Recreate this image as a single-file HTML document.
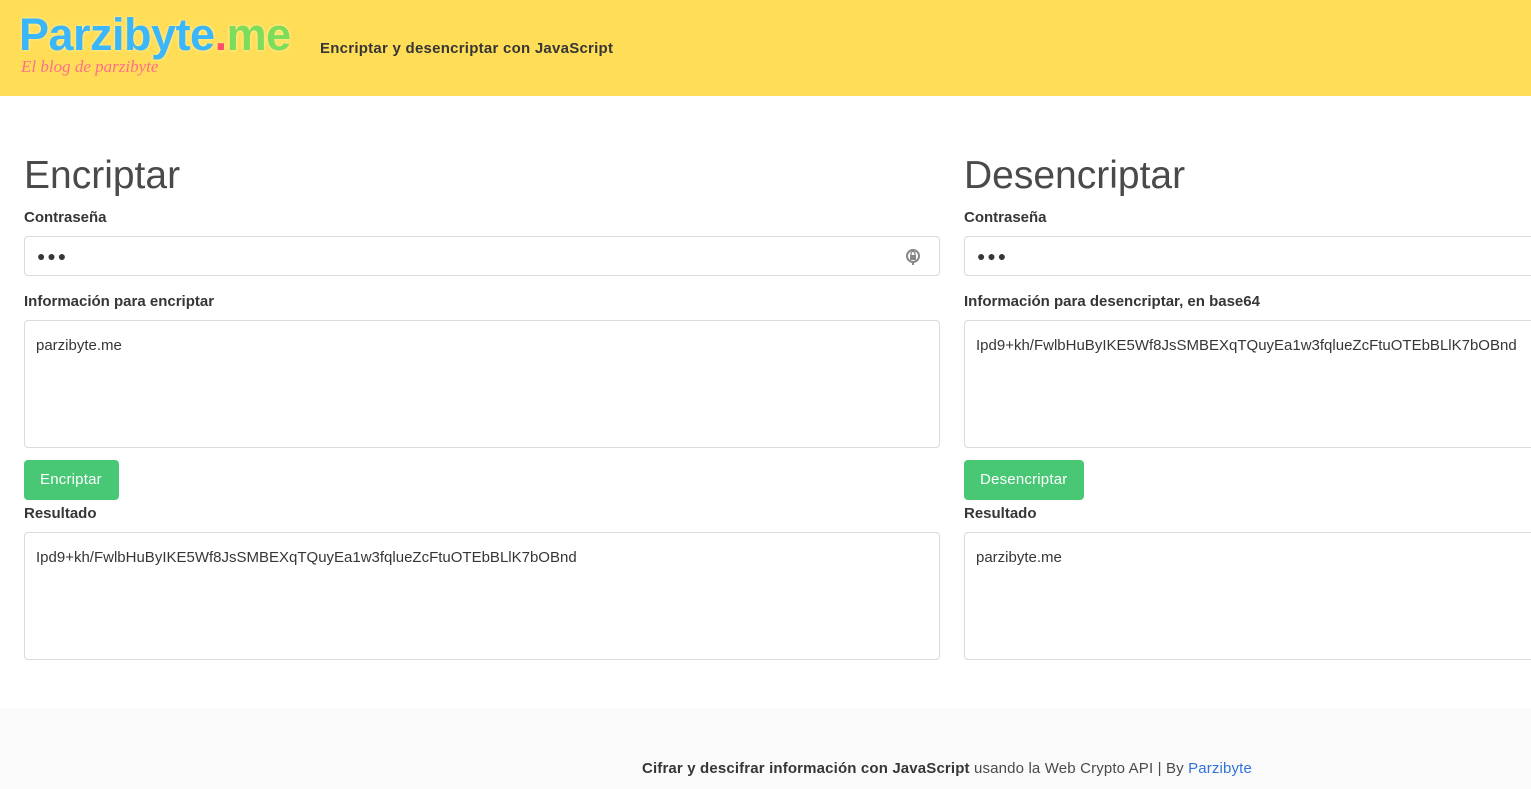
<!DOCTYPE html>
<html><head><meta charset="utf-8"><style>
*{box-sizing:border-box;margin:0;padding:0}
body{width:1531px;height:789px;overflow:hidden;font-family:"Liberation Sans",sans-serif;color:#4a4a4a;background:#fff;position:relative}
.hdr{position:absolute;left:0;top:0;width:1531px;height:96px;background:#ffdd57}
.logo{position:absolute;left:19px;top:9px;font-weight:bold;font-size:45px;letter-spacing:-0.5px;color:#3cb6fb;text-shadow:0 0 3px #fff6b0}
.logo .d{color:#ff4f6a}.logo .m{color:#7ddc59}
.sub{position:absolute;left:21px;top:57px;font-family:"Liberation Serif",serif;font-style:italic;font-size:17px;color:#ff6f8c}
.nav{position:absolute;left:320px;top:40px;font-size:15px;font-weight:bold;color:#363636;letter-spacing:0.25px}
.col{position:absolute;top:150px;width:916px}
h1{font-weight:normal;font-size:39px;color:#4a4a4a;height:50px;line-height:52px}
label{display:block;font-weight:bold;font-size:15px;color:#363636;height:20px;margin-top:9px}
.inp{margin-top:7px;height:40px;border:1px solid #dbdbdb;border-radius:4px;padding:0 12px;font-size:14px;line-height:38px;color:#363636;position:relative;letter-spacing:-1px}
.ta{margin-top:7px;height:128px;border:1px solid #dbdbdb;border-radius:4px;padding:16px 11px;font-size:15px;color:#363636}
.btn{display:inline-block;margin-top:12px;height:40px;line-height:40px;background:#48c774;color:#fff;border-radius:4px;padding:0 17px 0 16px;font-size:15px;letter-spacing:0.2px}
.ft{position:absolute;left:0;top:708px;width:1531px;height:81px;background:#fafafa}
.ftt{position:absolute;left:642px;top:760px;font-size:15px;color:#4a4a4a;letter-spacing:0.15px}
.ftt a{color:#3273dc;text-decoration:none}
</style></head><body>
<div class="hdr">
<div class="logo">Parzibyte<span class="d">.</span><span class="m">me</span></div>
<div class="sub">El blog de parzibyte</div>
<div class="nav">Encriptar y desencriptar con JavaScript</div>
</div>
<div class="col" style="left:24px">
<h1>Encriptar</h1>
<label>Contraseña</label>
<div class="inp">● ● ●<svg style="position:absolute;right:18px;top:11px" width="16" height="18" viewBox="0 0 16 18"><circle cx="8" cy="8" r="6" fill="none" stroke="#888" stroke-width="2"/><rect x="5" y="7" width="6" height="5" fill="#888"/><path d="M6 7V5.5a2 2 0 0 1 4 0V7" fill="none" stroke="#888" stroke-width="1.3"/><path d="M8 14v3" stroke="#888" stroke-width="2"/></svg></div>
<label style="margin-top:17px">Información para encriptar</label>
<div class="ta">parzibyte.me</div>
<div class="btn">Encriptar</div>
<label style="margin-top:5px">Resultado</label>
<div class="ta">Ipd9+kh/FwlbHuByIKE5Wf8JsSMBEXqTQuyEa1w3fqlueZcFtuOTEbBLlK7bOBnd</div>
</div>
<div class="col" style="left:964px;width:600px">
<h1>Desencriptar</h1>
<label>Contraseña</label>
<div class="inp">● ● ●</div>
<label style="margin-top:17px">Información para desencriptar, en base64</label>
<div class="ta">Ipd9+kh/FwlbHuByIKE5Wf8JsSMBEXqTQuyEa1w3fqlueZcFtuOTEbBLlK7bOBnd</div>
<div class="btn">Desencriptar</div>
<label style="margin-top:5px">Resultado</label>
<div class="ta">parzibyte.me</div>
</div>
<div class="ft"></div>
<div class="ftt"><b style="color:#363636">Cifrar y descifrar información con JavaScript</b> usando la Web Crypto API | By <a>Parzibyte</a></div>
</body></html>
